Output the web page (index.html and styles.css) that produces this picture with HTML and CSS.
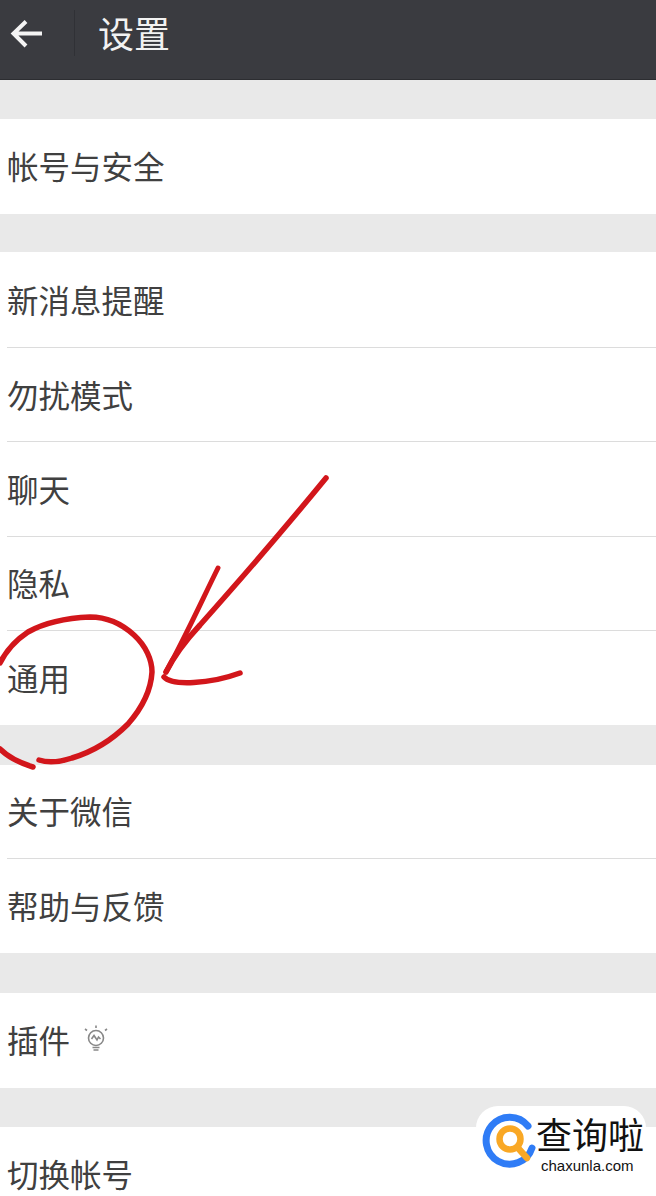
FILE: index.html
```html
<!DOCTYPE html>
<html lang="zh">
<head>
<meta charset="utf-8">
<title>设置</title>
<link rel="stylesheet" href="styles.css">
</head>
<body>
<div class="page">
  <header class="topbar">
    <svg class="back" width="36" height="36" viewBox="0 0 36 36"><path d="M33 16.500H5M17 4.500 4.500 16.500 17 29" fill="none" stroke="#f4f4f4" stroke-width="4"/></svg>
    <span class="divider"></span>
    <h1 class="title">设置</h1>
  </header>
  <section class="group first">
    <div class="row">帐号与安全</div>
  </section>
  <section class="group second">
    <div class="row lower">新消息提醒</div>
    <div class="row lower">勿扰模式</div>
    <div class="row">聊天</div>
    <div class="row">隐私</div>
    <div class="row">通用</div>
  </section>
  <section class="group">
    <div class="row short">关于微信</div>
    <div class="row">帮助与反馈</div>
  </section>
  <section class="group">
    <div class="row tall">插件
      <svg class="bulb" width="26" height="30" viewBox="0 0 26 30" fill="none" stroke="#888" stroke-width="1.600">
        <circle cx="13" cy="14" r="7.500"/>
        <path d="M9.500 23.500h7M10.500 26h5M8.500 15l2.500-3.500 3 4.500 1.500-3 2 2M2 5l2 1.500M24 5l-2 1.500M13 1.500v2.500"/>
      </svg>
    </div>
  </section>
  <section class="group last">
    <div class="row">切换帐号</div>
  </section>

  <svg class="ink" width="656" height="1196" viewBox="0 0 656 1196" fill="none" stroke="#d2161b" stroke-linecap="round" stroke-linejoin="round">
    <path stroke-width="5.500" d="M0 663C6 651 16 640 28 632C44 623 66 618 90 617C108 617 122 624 134 635C146 646 152 660 152 672C151 690 142 708 128 724C112 740 92 752 72 758C60 762 48 763 39 760"/>
    <path stroke-width="5.500" d="M0 749C8 757 20 763 33 767"/>
    <path stroke-width="5.500" d="M326 478C290 522 240 580 200 625C186 640 174 656 166 672"/>
    <path stroke-width="5" d="M218 568C204 596 184 640 166 672"/>
    <path stroke-width="5.500" d="M164 677C172 686 210 684 240 673"/>
  </svg>

  <div class="brand">
    <svg class="brand-mark" width="56" height="60" viewBox="0 0 56 60" fill="none" stroke-linecap="round">
      <path d="M51 38A23.500 23.500 0 1 1 47 16" stroke="#2f7cf6" stroke-width="7"/>
      <circle cx="29" cy="29" r="10.500" stroke="#f9a825" stroke-width="6.500"/>
      <path d="M37 38 46 48" stroke="#f9a825" stroke-width="6.500"/>
    </svg>
    <div class="brand-text">
      <div class="brand-cn">查询啦</div>
      <div class="brand-en">chaxunla.com</div>
    </div>
  </div>
</div>
</body>
</html>
```
FILE: styles.css
```css
* { box-sizing: border-box; margin: 0; padding: 0; }
html, body { background: #e9e9e9; }
.page {
  position: relative;
  width: 656px;
  height: 1196px;
  overflow: hidden;
  background: #e9e9e9;
  font-family: "Noto Sans CJK SC", "Liberation Sans", sans-serif;
}
.topbar {
  height: 80px;
  background: #3a3b40;
  display: flex;
  align-items: center;
  border-bottom: 1px solid #2c2d31;
  padding-bottom: 13px;
  color: #f2f2f2;
}
.back { margin-left: 9px; margin-top: 3px; flex: none; }
.divider {
  width: 1px;
  height: 46px;
  background: #303136;
  margin-left: 29px;
}
.title {
  margin-left: 23px;
  margin-bottom: 2px;
  font-size: 36px;
  font-weight: 400;
  line-height: 46px;
}
.group { margin-top: 40px; background: #fff; }
.group.first { margin-top: 39px; }
.group.second { margin-top: 38.900px; }
.group.last { margin-top: 39px; }
.row {
  height: 94.500px;
  display: flex;
  align-items: center;
  margin-left: 7px;
  padding-bottom: 3px;
  font-size: 31.500px;
  color: #404040;
  border-top: 1px solid #dcdcdc;
}
.row:first-child { border-top: 0; }
.row.lower { padding-bottom: 1px; }
.row.short { height: 93.500px; }
.row.tall { height: 95px; }
.bulb { margin-left: 13px; }
.ink { position: absolute; left: 0; top: 0; pointer-events: none; }
.brand {
  position: absolute;
  left: 476px;
  top: 1106px;
  width: 170px;
  height: 90px;
  background: #fff;
  border-radius: 22px 22px 0 0;
  display: flex;
  align-items: flex-start;
  padding: 4px 0 0 5px;
}
.brand-mark { flex: none; }
.brand-text { margin-left: -1px; color: #111; }
.brand-cn {
  font-family: "Noto Sans CJK SC", serif;
  font-size: 36px;
  line-height: 40px;
  white-space: nowrap;
  margin-top: 3px;
}
.brand-en {
  font-family: "Liberation Sans", sans-serif;
  font-size: 15px;
  line-height: 16px;
  margin-top: 5px;
  margin-left: 5px;
}
```
